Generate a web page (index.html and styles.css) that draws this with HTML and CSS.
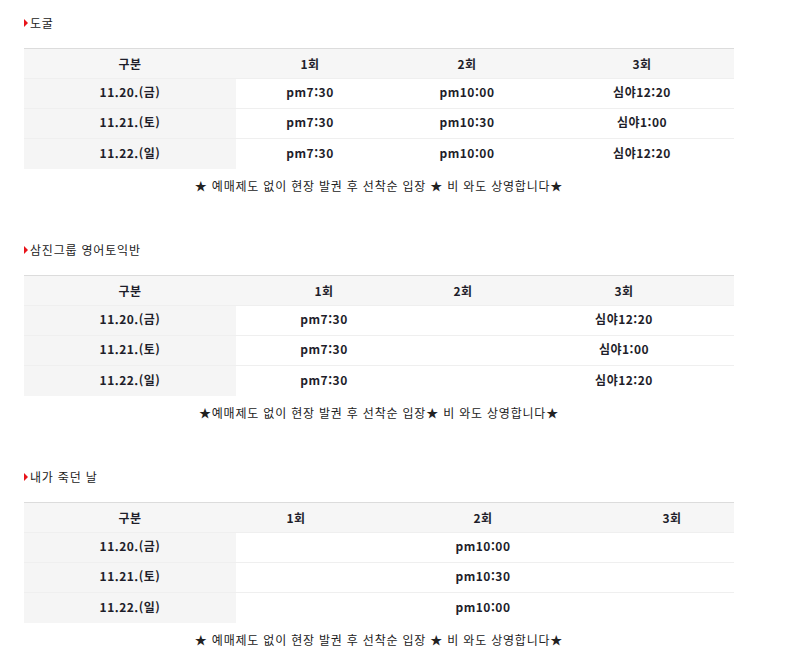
FILE: index.html
```html
<!DOCTYPE html>
<html lang="ko">
<head>
<meta charset="utf-8">
<title>상영 시간표</title>
<link rel="stylesheet" href="styles.css">
</head>
<body>
<div class="wrap">
  <section class="movie">
    <h3 class="title"><span class="arrow"></span>도굴</h3>
    <table class="sched s1">
      <colgroup><col class="c1"><col class="c2"><col class="c3"><col class="c4"></colgroup>
      <thead><tr><th>구분</th><th>1회</th><th>2회</th><th>3회</th></tr></thead>
      <tbody>
        <tr><th>11.20.(금)</th><td>pm7:30</td><td>pm10:00</td><td>심야12:20</td></tr>
        <tr><th>11.21.(토)</th><td>pm7:30</td><td>pm10:30</td><td>심야1:00</td></tr>
        <tr><th>11.22.(일)</th><td>pm7:30</td><td>pm10:00</td><td>심야12:20</td></tr>
      </tbody>
    </table>
    <p class="note">★ 예매제도 없이 현장 발권 후 선착순 입장 ★ 비 와도 상영합니다★</p>
  </section>

  <section class="movie">
    <h3 class="title"><span class="arrow"></span>삼진그룹 영어토익반</h3>
    <table class="sched s2">
      <colgroup><col class="c1"><col class="c2"><col class="c3"><col class="c4"></colgroup>
      <thead><tr><th>구분</th><th>1회</th><th>2회</th><th>3회</th></tr></thead>
      <tbody>
        <tr><th>11.20.(금)</th><td>pm7:30</td><td></td><td>심야12:20</td></tr>
        <tr><th>11.21.(토)</th><td>pm7:30</td><td></td><td>심야1:00</td></tr>
        <tr><th>11.22.(일)</th><td>pm7:30</td><td></td><td>심야12:20</td></tr>
      </tbody>
    </table>
    <p class="note">★예매제도 없이 현장 발권 후 선착순 입장★ 비 와도 상영합니다★</p>
  </section>

  <section class="movie">
    <h3 class="title"><span class="arrow"></span>내가 죽던 날</h3>
    <table class="sched s3">
      <colgroup><col class="c1"><col class="c2"><col class="c3"><col class="c4"></colgroup>
      <thead><tr><th>구분</th><th>1회</th><th>2회</th><th>3회</th></tr></thead>
      <tbody>
        <tr><th>11.20.(금)</th><td></td><td>pm10:00</td><td></td></tr>
        <tr><th>11.21.(토)</th><td></td><td>pm10:30</td><td></td></tr>
        <tr><th>11.22.(일)</th><td></td><td>pm10:00</td><td></td></tr>
      </tbody>
    </table>
    <p class="note">★ 예매제도 없이 현장 발권 후 선착순 입장 ★ 비 와도 상영합니다★</p>
  </section>
</div>
</body>
</html>
```

FILE: styles.css
```css
html, body {
  margin: 0;
  padding: 0;
  background: #fff;
}
body {
  font-family: "Noto Sans CJK KR", "Noto Sans", sans-serif;
  font-size: 12px;
  color: #222;
}
.wrap {
  padding: 15px 0 0 24px;
  width: 710px;
}
.movie {
  margin-bottom: 48px;
}
.title {
  margin: 0 0 17px;
  font-size: 12px;
  font-weight: normal;
  line-height: 16px;
  height: 16px;
  color: #222;
  letter-spacing: 0.8px;
  display: flex;
  align-items: center;
}
.arrow {
  width: 0;
  height: 0;
  border-top: 4px solid transparent;
  border-bottom: 4px solid transparent;
  border-left: 4px solid #e8141b;
  margin-right: 2px;
}
.sched {
  width: 710px;
  border-collapse: collapse;
  table-layout: fixed;
  border-top: 1px solid #dcdcdc;
}
.sched th,
.sched td {
  height: 29px;
  padding: 0;
  text-align: center;
  font-weight: bold;
  font-size: 12px;
  letter-spacing: 0.5px;
  color: #1e1e2a;
  border-bottom: 1px solid #efefef;
  line-height: 16px;
}
.sched thead th {
  background: #f6f6f6;
}
.sched tbody th,
.sched tbody td {
  height: 26px;
  padding-bottom: 3px;
}
.sched tbody th {
  background: #f5f5f5;
}
.sched tbody tr:last-child th,
.sched tbody tr:last-child td {
  border-bottom: none;
  height: 27px;
}
.sched .c1 { width: 212px; }
.s1 .c2 { width: 148px; }
.s1 .c3 { width: 166px; }
.s1 .c4 { width: 184px; }
.s2 .c2 { width: 176px; }
.s2 .c3 { width: 102px; }
.s2 .c4 { width: 220px; }
.s3 .c2 { width: 120px; }
.s3 .c3 { width: 254px; }
.s3 .c4 { width: 124px; }
.note {
  margin: 9px 0 0;
  line-height: 16px;
  text-align: center;
  color: #222;
  font-size: 12px;
  letter-spacing: 0.8px;
}
```
